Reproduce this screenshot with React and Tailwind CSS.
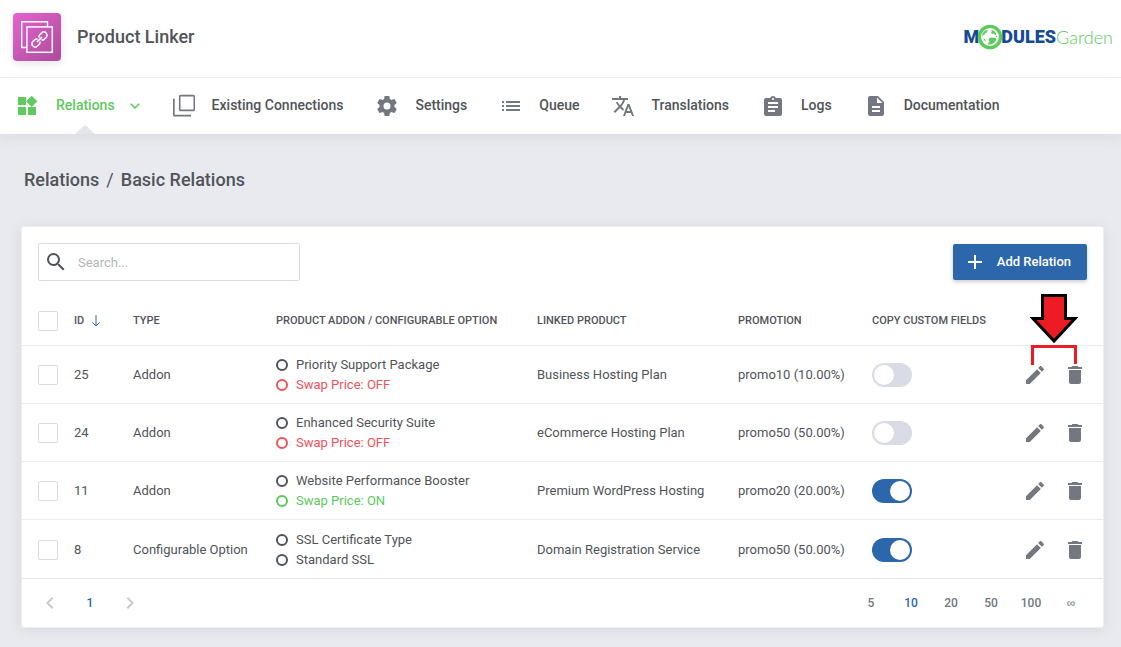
import { useState } from "react";
import clsx from "clsx";

const navItems = [
  { label: "Existing Connections", icon: "connections" },
  { label: "Settings", icon: "settings" },
  { label: "Queue", icon: "list" },
  { label: "Translations", icon: "translate" },
  { label: "Logs", icon: "clipboard" },
  { label: "Documentation", icon: "document" },
];

const initialRows = [
  {
    id: 25,
    type: "Addon",
    items: [
      { text: "Priority Support Package", tone: "default" },
      { text: "Swap Price: OFF", tone: "danger" },
    ],
    product: "Business Hosting Plan",
    promotion: "promo10 (10.00%)",
    copyFields: false,
  },
  {
    id: 24,
    type: "Addon",
    items: [
      { text: "Enhanced Security Suite", tone: "default" },
      { text: "Swap Price: OFF", tone: "danger" },
    ],
    product: "eCommerce Hosting Plan",
    promotion: "promo50 (50.00%)",
    copyFields: false,
  },
  {
    id: 11,
    type: "Addon",
    items: [
      { text: "Website Performance Booster", tone: "default" },
      { text: "Swap Price: ON", tone: "success" },
    ],
    product: "Premium WordPress Hosting",
    promotion: "promo20 (20.00%)",
    copyFields: true,
  },
  {
    id: 8,
    type: "Configurable Option",
    items: [
      { text: "SSL Certificate Type", tone: "default" },
      { text: "Standard SSL", tone: "default" },
    ],
    product: "Domain Registration Service",
    promotion: "promo50 (50.00%)",
    copyFields: true,
  },
];

const pageSizes = ["5", "10", "20", "50", "100", "∞"];

const tones = {
  default: "text-[#505459]",
  danger: "text-[#f0525a]",
  success: "text-[#5bc85c]",
};

const icons = {
  widgets:
    "M13 13v8h8v-8h-8zM3 21h8v-8H3v8zM3 3v8h8V3H3zm13.66-1.31L11 7.34 16.66 13l5.66-5.66-5.66-5.65z",
  connections:
    "M21.5 15.5v-13h-13v13h13zM23 15.5c0 .9-.7 1.8-1.6 1.8H8.6c-1 0-1.7-.8-1.7-1.8v-13c0-1 .7-1.7 1.7-1.7h12.8c.9 0 1.6.7 1.6 1.7v13zM19 20.7v1.8H2.6c-.9 0-1.6-.7-1.6-1.6V4.7h1.7v16H19z",
  settings:
    "M12 15.5A3.5 3.5 0 0 1 8.5 12 3.5 3.5 0 0 1 12 8.5a3.5 3.5 0 0 1 3.5 3.5 3.5 3.5 0 0 1-3.5 3.5m7.43-2.53c.04-.32.07-.64.07-.97 0-.33-.03-.66-.07-1l2.11-1.63c.19-.15.24-.42.12-.64l-2-3.46c-.12-.22-.39-.31-.61-.22l-2.49 1c-.52-.39-1.06-.73-1.69-.98l-.37-2.65A.506.506 0 0 0 14 2h-4c-.25 0-.46.18-.5.42l-.37 2.65c-.63.25-1.17.59-1.69.98l-2.49-1c-.22-.09-.49 0-.61.22l-2 3.46c-.13.22-.07.49.12.64L4.57 11c-.04.34-.07.67-.07 1 0 .33.03.65.07.97l-2.11 1.66c-.19.15-.25.42-.12.64l2 3.46c.12.22.39.3.61.22l2.49-1.01c.52.4 1.06.74 1.69.99l.37 2.65c.04.24.25.42.5.42h4c.25 0 .46-.18.5-.42l.37-2.65c.63-.26 1.17-.59 1.69-.99l2.49 1.01c.22.08.49 0 .61-.22l2-3.46c.12-.22.07-.49-.12-.64l-2.11-1.66z",
  list: "M3 13h2v-2H3v2zm0 4h2v-2H3v2zm0-8h2V7H3v2zm4 4h14v-2H7v2zm0 4h14v-2H7v2zM7 7v2h14V7H7z",
  translate:
    "M12.87 15.07l-2.54-2.51.03-.03c1.74-1.94 2.98-4.17 3.71-6.53H17V4h-7V2H8v2H1v1.99h11.17C11.5 7.92 10.44 9.75 9 11.35 8.07 10.32 7.3 9.19 6.69 8h-2c.73 1.63 1.73 3.17 2.98 4.56l-5.09 5.02L4 19l5-5 3.11 3.11.76-2.04zM18.5 10h-2L12 22h2l1.12-3h4.75L21 22h2l-4.5-12zm-2.62 7l1.62-4.33L19.12 17h-3.24z",
  clipboard:
    "M19 4h-4.18C14.4 2.84 13.3 2 12 2s-2.4.84-2.82 2H5c-1.1 0-2 .9-2 2v14c0 1.1.9 2 2 2h14c1.1 0 2-.9 2-2V6c0-1.1-.9-2-2-2zm-7 0c.55 0 1 .45 1 1s-.45 1-1 1-1-.45-1-1 .45-1 1-1zm2 14H7v-2h7v2zm3-4H7v-2h10v2zm0-4H7V8h10v2z",
  document:
    "M14 2H6c-1.1 0-2 .9-2 2v16c0 1.1.9 2 2 2h12c1.1 0 2-.9 2-2V8l-6-6zm2 16H8v-2h8v2zm0-4H8v-2h8v2zm-3-5V3.5L18.5 9H13z",
  search:
    "M15.5 14h-.79l-.28-.27A6.471 6.471 0 0 0 16 9.5 6.5 6.5 0 1 0 9.5 16c1.61 0 3.09-.59 4.23-1.57l.27.28v.79l5 4.99L20.49 19l-4.99-5zm-6 0C7.01 14 5 11.99 5 9.5S7.01 5 9.5 5 14 7.01 14 9.5 11.99 14 9.5 14z",
  plus: "M19 13h-6v6h-2v-6H5v-2h6V5h2v6h6v2z",
  pencil:
    "M3 17.25V21h3.75L17.81 9.94l-3.75-3.75L3 17.25zM20.71 7.04c.39-.39.39-1.02 0-1.41l-2.34-2.34c-.39-.39-1.02-.39-1.41 0l-1.83 1.83 3.75 3.75 1.83-1.83z",
  trash:
    "M6 19c0 1.1.9 2 2 2h8c1.1 0 2-.9 2-2V7H6v12zM19 4h-3.5l-1-1h-5l-1 1H5v2h14V4z",
  left: "M15.41 7.41L14 6l-6 6 6 6 1.41-1.41L10.83 12z",
  right: "M8.59 16.59L13.17 12 8.59 7.41 10 6l6 6-6 6z",
};

const Icon = ({ name, className }) => (
  <svg
    viewBox="0 0 24 24"
    fill="currentColor"
    aria-hidden="true"
    className={clsx("size-6 shrink-0", className)}
  >
    <path d={icons[name]} />
  </svg>
);

const AppIcon = () => (
  <span className="flex size-12 items-center justify-center rounded bg-linear-to-br from-[#e563d0] to-[#ae4b9b] shadow-[0_2px_8px_rgba(0,0,0,0.12)]">
    <svg viewBox="0 0 48 48" fill="none" stroke="#fff" className="size-12">
      <path d="M14 34.5H8.7V8.7h25.8V14" strokeWidth="1.4" />
      <rect x="13.9" y="13.9" width="25.4" height="25.4" strokeWidth="1.5" />
      <g transform="rotate(-45 26.5 26.5)" strokeWidth="1.5" strokeLinecap="round">
        <path d="M25.2 28.6a3 3 0 0 1-2.400 1.100h-2.400a3.2 3.2 0 0 1 0-6.4h2.400a3 3 0 0 1 2.400 1.100" />
        <path d="M27.800 24.400a3 3 0 0 1 2.400-1.100h2.400a3.2 3.2 0 0 1 0 6.4h-2.400a3 3 0 0 1-2.400-1.100" />
        <path d="M23.5 26.5h6" />
      </g>
    </svg>
  </span>
);

const BrandLogo = () => (
  <a href="#home" className="flex items-center text-lg">
    <span className="font-['Roboto',sans-serif] font-black text-[#174a94]">M</span>
    <svg viewBox="0 0 26 26" className="relative -mx-0.5 size-[26px]" aria-label="O">
      <circle cx="13" cy="13" r="10.6" fill="#fff" stroke="#5dca5c" strokeWidth="3.4" />
      <path
        fill="#5dca5c"
        d="M5.5 9.500l2.200-2.800 2.600-.8.6 1-1.400.8.2 1.200-1.600.4-.6 1.400-1.200.2-.2 1.200-.8.2zM14 5.800l3.400 1.200 1.800 2.400-.4 1.600-1.400-.4-.6-1-2 .4-.6-1.400.8-.8zM12.200 14.200l2.600-.8 3.800.6.8 1.400-1.600 2.800-2.800 2-3.600.4-.6-1.200 1.400-1.200.2-1.400-1.200-.6zM6.400 14.600l1.600.4.800 1.600-.8.8zM18.800 11.600l1.400.2v1.400l-1.200-.4z"
      />
    </svg>
    <span className="font-['Roboto',sans-serif] font-black text-[#174a94]">DULES</span>
    <span className="font-['Lato',sans-serif] font-light text-[#5dca5c]">Garden</span>
  </a>
);

const Header = () => (
  <header className="flex items-center justify-between border-b border-[#eff0f2] bg-white pt-[13px] pr-2 pb-4 pl-[13px]">
    <div className="flex items-center gap-4">
      <AppIcon />
      <span className="text-lg font-medium">Product Linker</span>
    </div>
    <BrandLogo />
  </header>
);

const Nav = () => (
  <nav className="relative flex h-14 items-center gap-8 bg-white pl-[15px] text-sm font-medium shadow-[0_4px_12px_rgba(60,65,85,0.08)]">
    <a href="#relations" className="flex h-full items-center text-[#5fca60]">
      <Icon name="widgets" />
      <span className="relative ml-[17px] flex h-full items-center pb-0.5">
        Relations
        <svg
          viewBox="0 0 20 9"
          fill="#e5e6eb"
          className="absolute bottom-0 left-1/2 h-[9px] w-5 -translate-x-1/2"
        >
          <path d="M0 9l8.600-8q1.400-1 2.800 0L20 9z" />
        </svg>
      </span>
      <svg
        viewBox="0 0 10 6"
        fill="none"
        stroke="currentColor"
        strokeWidth="1.600"
        className="ml-[15px] h-1.5 w-[10px]"
      >
        <path d="M.8.8L5 5 9.200.8" />
      </svg>
    </a>
    {navItems.map((item) => (
      <a
        key={item.label}
        href={`#${item.icon}`}
        className="flex h-full items-center gap-4 whitespace-nowrap"
      >
        <Icon name={item.icon} className="text-[#737780]" />
        <span className="pb-0.5">{item.label}</span>
      </a>
    ))}
  </nav>
);

const CheckBox = ({ label }) => (
  <input
    type="checkbox"
    aria-label={label}
    className="block size-5 appearance-none rounded-xs border border-[#d9dbe5] bg-white checked:bg-[#2c67ab]"
  />
);

const Toggle = ({ checked, onChange, label }) => (
  <input
    type="checkbox"
    role="switch"
    aria-label={label}
    checked={checked}
    onChange={onChange}
    className="block h-6 w-10 cursor-pointer appearance-none rounded-full bg-[#dadce5] p-0.5 before:block before:size-5 before:rounded-full before:bg-white checked:bg-[#2c67ab] checked:before:translate-x-4"
  />
);

const ActionPointer = () => (
  <svg
    viewBox="0 0 48 72"
    aria-hidden="true"
    className="pointer-events-none absolute top-0 right-[25px] h-[72px] w-12"
  >
    <path
      d="M12.500 2.500h23v23h9.500L24 48 3 25.500h9.500z"
      fill="#ed1c24"
      stroke="#000"
      strokeWidth="3"
    />
    <path d="M2.500 72V53.500h43V71" fill="none" stroke="#ed1c24" strokeWidth="3" />
  </svg>
);

const RelationRow = ({ row, onToggle }) => (
  <tr className="h-[58px] border-t border-[#ebecef] last:h-[59px] [&>td]:pt-0.5">
    <td className="pl-4">
      <CheckBox label={`Select relation ${row.id}`} />
    </td>
    <td>{row.id}</td>
    <td>{row.type}</td>
    <td>
      <ul>
        {row.items.map((item) => (
          <li
            key={item.text}
            className={clsx("flex items-center gap-2 leading-5", tones[item.tone])}
          >
            <span className="size-3 rounded-full border-2 border-current" />
            {item.text}
          </li>
        ))}
      </ul>
    </td>
    <td>{row.product}</td>
    <td>{row.promotion}</td>
    <td>
      <Toggle
        checked={row.copyFields}
        onChange={() => onToggle(row.id)}
        label={`Copy custom fields for relation ${row.id}`}
      />
    </td>
    <td className="pr-2">
      <div className="flex justify-end text-[#737780]">
        <button type="button" aria-label="Edit" className="flex w-10 justify-center">
          <Icon name="pencil" />
        </button>
        <button type="button" aria-label="Delete" className="flex w-10 justify-center">
          <Icon name="trash" />
        </button>
      </div>
    </td>
  </tr>
);

const Pagination = () => {
  const [size, setSize] = useState("10");

  return (
    <div className="flex h-[49px] items-center justify-between border-t border-[#e6e7ec] pr-3 pl-2 text-xs font-medium text-[#737780]">
      <div className="flex items-center">
        <button type="button" aria-label="Previous page" className="flex w-10 justify-center text-[#c9cacd]">
          <Icon name="left" />
        </button>
        <button type="button" className="w-10 text-[#2c67ab]">
          1
        </button>
        <button type="button" aria-label="Next page" className="flex w-10 justify-center text-[#c9cacd]">
          <Icon name="right" />
        </button>
      </div>
      <div className="flex items-center">
        {pageSizes.map((value) => (
          <button
            key={value}
            type="button"
            onClick={() => setSize(value)}
            className={clsx(
              "w-10",
              value === size && "text-[#2c67ab]",
              value === "∞" && "font-['Liberation_Sans',sans-serif] font-normal"
            )}
          >
            {value}
          </button>
        ))}
      </div>
    </div>
  );
};

const App = () => {
  const [rows, setRows] = useState(initialRows);

  const handleToggle = (id) => {
    setRows(
      rows.map((row) => (row.id === id ? { ...row, copyFields: !row.copyFields } : row))
    );
  };

  return (
    <div className="min-h-screen bg-[#e9eaef] font-['Roboto',sans-serif] text-[#505459]">
      <Header />
      <Nav />
      <main className="pt-8 pr-[17px] pb-[18px] pl-[21px]">
        <h1 className="flex gap-[7px] pl-[3px] text-lg font-medium">
          <span>Relations</span>
          <span className="font-normal">/</span>
          <span>Basic Relations</span>
        </h1>

        <section className="mt-8 rounded-[3px] border border-[#eeeff3] bg-white shadow-[0_2px_14px_rgba(60,65,85,0.1)]">
          <div className="flex items-center justify-between px-4 pt-4 pb-3">
            <label className="flex h-[38px] w-[262px] items-center gap-2.5 rounded-xs border border-[#d9dbe5] pl-[5px]">
              <Icon name="search" />
              <input
                type="text"
                aria-label="Search"
                placeholder="Search..."
                className="min-w-0 flex-1 pt-0.5 text-[13px] outline-none placeholder:text-[#b3b4b6]"
              />
            </label>
            <button
              type="button"
              className="flex h-9 items-center gap-2.5 rounded-xs bg-[#2c67ab] pr-4 pl-2.5 text-[13px] font-medium text-white shadow-[0_2px_4px_rgba(0,0,0,0.2)]"
            >
              <Icon name="plus" />
              Add Relation
            </button>
          </div>

          <div className="relative">
            <table className="w-full table-fixed text-left text-[13px]">
              <thead>
                <tr className="h-[52px] text-[11px] uppercase [&>th]:pt-1 [&>th]:font-medium">
                  <th className="w-[52px] pl-4">
                    <CheckBox label="Select all" />
                  </th>
                  <th className="w-[59px]">
                    <button type="button" className="flex items-center gap-2 font-medium uppercase">
                      ID
                      <svg
                        viewBox="0 0 8 12"
                        fill="none"
                        stroke="#2c67ab"
                        className="h-3 w-2"
                      >
                        <path d="M4 0v11M.5 7.500L4 11l3.500-3.500" />
                      </svg>
                    </button>
                  </th>
                  <th className="w-[143px]">Type</th>
                  <th>Product Addon / Configurable Option</th>
                  <th className="w-[201px]">Linked Product</th>
                  <th className="w-[134px]">Promotion</th>
                  <th className="w-[130px]">Copy Custom Fields</th>
                  <th className="w-[101px]" aria-label="Actions" />
                </tr>
              </thead>
              <tbody>
                {rows.map((row) => (
                  <RelationRow key={row.id} row={row} onToggle={handleToggle} />
                ))}
              </tbody>
            </table>
            <ActionPointer />
          </div>

          <Pagination />
        </section>
      </main>
    </div>
  );
};

export default App;
